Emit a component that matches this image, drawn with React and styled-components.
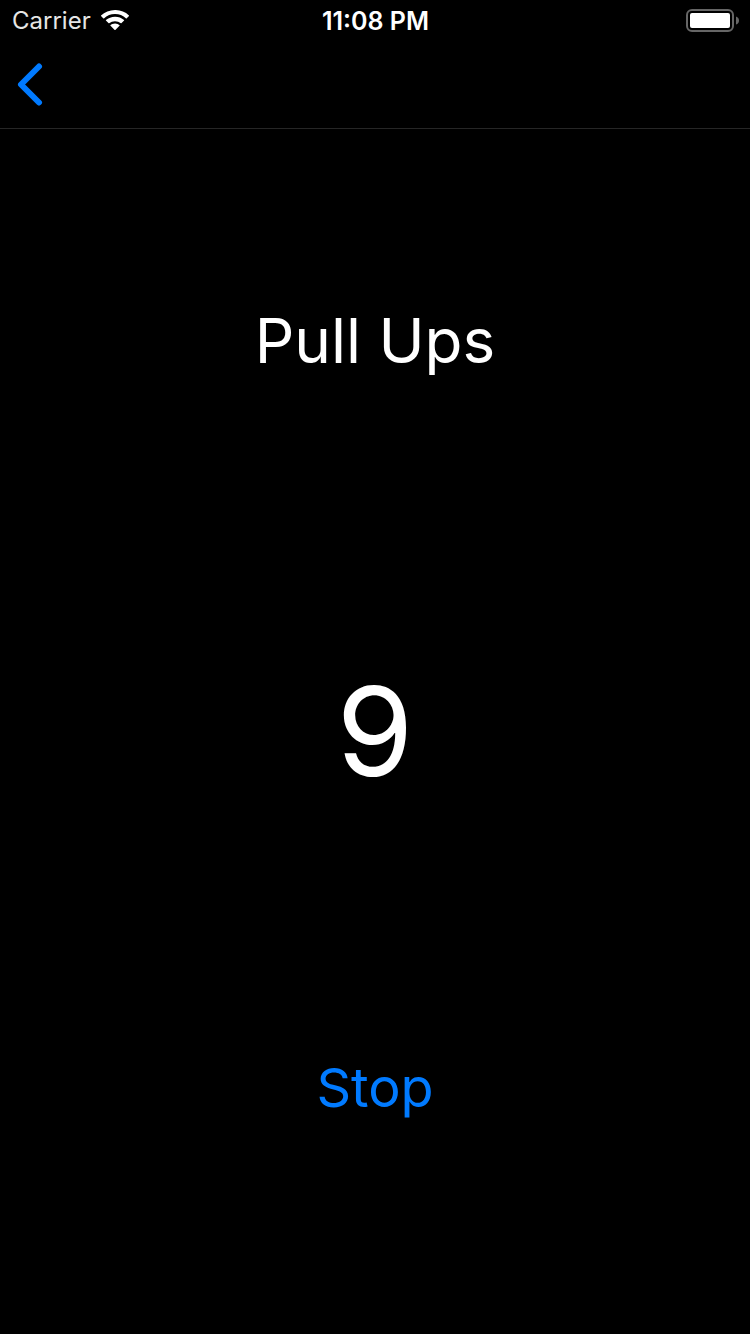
import React from "react";
import styled, { createGlobalStyle } from "styled-components";

const GlobalStyle = createGlobalStyle`
  * { box-sizing: border-box; }
  body {
    margin: 0;
    background: #000;
    color: #fff;
    font-family: Inter, "Liberation Sans", sans-serif;
  }
`;

const Screen = styled.div`
  min-height: 100vh;
  display: flex;
  flex-direction: column;
  background: #000;
`;

const StatusBar = styled.header`
  height: 42px;
  padding: 0 11px 0 12px;
  display: grid;
  grid-template-columns: 1fr auto 1fr;
  align-items: center;
  font-size: 24px;
  line-height: 42px;
`;

const Carrier = styled.div`
  display: flex;
  align-items: center;
  gap: 10px;
  color: #e6e6e6;
`;

const Clock = styled.time`
  font-size: 25px;
  font-weight: 600;
`;

const Battery = styled.svg`
  justify-self: end;
`;

const NavBar = styled.nav`
  height: 87px;
  padding-left: 16px;
  display: flex;
  align-items: center;
  border-bottom: 1px solid #262626;
`;

const BackButton = styled.button`
  display: flex;
  padding: 0;
  border: 0;
  background: none;
  color: #007aff;
  cursor: pointer;
`;

const Workout = styled.main`
  flex: 1;
  display: flex;
  flex-direction: column;
  align-items: center;
  justify-content: space-between;
  padding: 172px 0 206px;
`;

const Title = styled.h1`
  margin: 0;
  font-size: 62px;
  font-weight: 400;
  line-height: 80px;
`;

const Count = styled.output`
  margin-top: 32px;
  font-size: 124px;
  line-height: 152px;
`;

const StopButton = styled.button`
  padding: 0;
  border: 0;
  background: none;
  color: #007aff;
  font-family: inherit;
  font-size: 54px;
  line-height: 80px;
  cursor: pointer;
`;

export default function App() {
  return (
    <Screen>
      <GlobalStyle />
      <StatusBar>
        <Carrier>
          <span>Carrier</span>
          <svg width="28" height="22" viewBox="0 0 28 22" fill="#fff" role="img" aria-label="Wi-Fi">
            <path d="M14 0C8.600 0 3.700 2.100 0 5.400V5.900L2.500 8.400H2.900A16.300 16.300 0 0 1 25.100 8.400H25.500L28 5.900V5.400A20 20 0 0 0 14 0Z" />
            <path d="M14 6.700C10.500 6.700 7.300 8 4.900 10.100V10.600L7.700 13.300H8.100A9.200 9.200 0 0 1 19.900 13.300H20.300L23.100 10.600V10.100A13.500 13.500 0 0 0 14 6.700Z" />
            <path d="M14 13.400C12.200 13.400 10.500 14.100 9.300 15.200V15.600L13.700 20H14.300L18.700 15.600V15.200A6.800 6.800 0 0 0 14 13.400Z" />
          </svg>
        </Carrier>
        <Clock>11:08 PM</Clock>
        <Battery width="53" height="24" viewBox="0 0 53 24" role="img" aria-label="Battery full">
          <rect x="1" y="1" width="46" height="21" rx="5" fill="none" stroke="#666" strokeWidth="2" />
          <rect x="4" y="4" width="40" height="15" rx="2" fill="#fff" />
          <path d="M50 7.500Q53 8.500 53 11.500T50 15.500Z" fill="#666" />
        </Battery>
      </StatusBar>
      <NavBar>
        <BackButton aria-label="Back">
          <svg width="28" height="44" viewBox="0 0 28 44" fill="none" stroke="currentColor" strokeWidth="6" strokeLinecap="round" strokeLinejoin="round">
            <path d="M23 3.500L5 21.500L23 39.500" />
          </svg>
        </BackButton>
      </NavBar>
      <Workout>
        <Title>Pull Ups</Title>
        <Count>9</Count>
        <StopButton>Stop</StopButton>
      </Workout>
    </Screen>
  );
}
